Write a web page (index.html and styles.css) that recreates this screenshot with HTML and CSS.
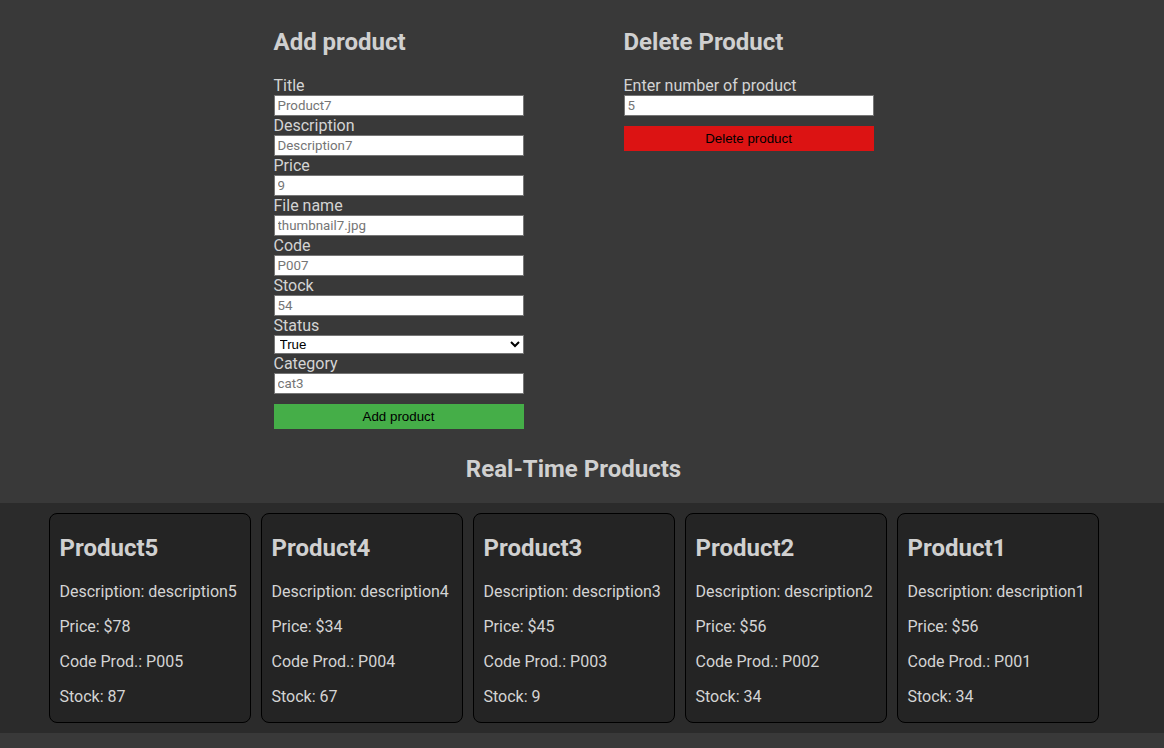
FILE: index.html
```html
<!DOCTYPE html>
<html lang="en">
<head>
<meta charset="utf-8">
<title>Products</title>
<link rel="stylesheet" href="styles.css">
</head>
<body>
  <div class="forms">
    <form class="panel">
      <h2 class="panel-title">Add product</h2>
      <label class="field-label" for="title">Title</label>
      <input class="field" id="title" type="text" placeholder="Product7">
      <label class="field-label" for="desc">Description</label>
      <input class="field" id="desc" type="text" placeholder="Description7">
      <label class="field-label" for="price">Price</label>
      <input class="field" id="price" type="text" placeholder="9">
      <label class="field-label" for="file">File name</label>
      <input class="field" id="file" type="text" placeholder="thumbnail7.jpg">
      <label class="field-label" for="code">Code</label>
      <input class="field" id="code" type="text" placeholder="P007">
      <label class="field-label" for="stock">Stock</label>
      <input class="field" id="stock" type="text" placeholder="54">
      <label class="field-label" for="status">Status</label>
      <select class="select" id="status">
        <option>True</option>
        <option>False</option>
      </select>
      <label class="field-label" for="cat">Category</label>
      <input class="field" id="cat" type="text" placeholder="cat3">
      <button type="button" class="btn btn-add">Add product</button>
    </form>
    <form class="panel">
      <h2 class="panel-title">Delete Product</h2>
      <label class="field-label" for="num">Enter number of product</label>
      <input class="field" id="num" type="text" placeholder="5">
      <button type="button" class="btn btn-delete">Delete product</button>
    </form>
  </div>
  <h2 class="section-title">Real-Time Products</h2>
  <div class="strip">
    <div class="card">
      <h2 class="card-title">Product5</h2>
      <p class="card-line">Description: description5</p>
      <p class="card-line">Price: $78</p>
      <p class="card-line">Code Prod.: P005</p>
      <p class="card-line">Stock: 87</p>
    </div>
    <div class="card">
      <h2 class="card-title">Product4</h2>
      <p class="card-line">Description: description4</p>
      <p class="card-line">Price: $34</p>
      <p class="card-line">Code Prod.: P004</p>
      <p class="card-line">Stock: 67</p>
    </div>
    <div class="card">
      <h2 class="card-title">Product3</h2>
      <p class="card-line">Description: description3</p>
      <p class="card-line">Price: $45</p>
      <p class="card-line">Code Prod.: P003</p>
      <p class="card-line">Stock: 9</p>
    </div>
    <div class="card">
      <h2 class="card-title">Product2</h2>
      <p class="card-line">Description: description2</p>
      <p class="card-line">Price: $56</p>
      <p class="card-line">Code Prod.: P002</p>
      <p class="card-line">Stock: 34</p>
    </div>
    <div class="card">
      <h2 class="card-title">Product1</h2>
      <p class="card-line">Description: description1</p>
      <p class="card-line">Price: $56</p>
      <p class="card-line">Code Prod.: P001</p>
      <p class="card-line">Stock: 34</p>
    </div>
  </div>
</body>
</html>
```
FILE: styles.css
```css
html {
  background: #393939;
}
body {
  margin: 0;
  padding: 8px 0 20px;
  background: #393939;
  color: #d2d2d2;
  font-family: Roboto, "Liberation Sans", sans-serif;
  font-size: 16px;
}
.forms {
  display: flex;
  justify-content: center;
  gap: 100px;
  padding-right: 17px;
  padding-bottom: 6px;
}
.panel {
  width: 250px;
  display: flex;
  flex-direction: column;
  margin: 0;
}
.panel-title {
  font-size: 24px;
  font-weight: 700;
  margin: 20px 0;
  color: #d0d0d0;
}
.field-label {
  display: block;
  font-size: 16px;
  line-height: 19px;
  color: #d4d4d4;
}
.field {
  box-sizing: border-box;
  width: 250px;
  height: 21px;
  margin: 0;
  padding: 1px 3px;
  border: 1px solid #767676;
  background: #fff;
  font-family: Roboto, "Liberation Sans", sans-serif;
  font-size: 13.33px;
  color: #000;
}
.field::placeholder {
  color: #757575;
}
.select {
  box-sizing: border-box;
  width: 250px;
  height: 19px;
  margin: 0;
  padding: 0 1px;
  border: 1px solid #767676;
  border-radius: 0;
  background: #fff;
  font-family: "Liberation Sans", Arial, sans-serif;
  font-size: 13.33px;
  color: #000;
}
.btn {
  box-sizing: border-box;
  width: 250px;
  height: 25px;
  margin-top: 10px;
  border: none;
  font-family: "Liberation Sans", Arial, sans-serif;
  font-size: 13.33px;
  color: #000;
  cursor: pointer;
}
.btn-add {
  background: #45ae48;
}
.btn-delete {
  background: #dc1313;
}
.section-title {
  text-align: center;
  font-size: 24px;
  font-weight: 700;
  margin: 20px 0;
  padding-right: 17px;
  color: #d0d0d0;
}
.strip {
  display: flex;
  justify-content: center;
  gap: 10px;
  padding: 10px 17px 10px 0;
  background: #2b2b2b;
}
.card {
  box-sizing: border-box;
  width: 202px;
  padding: 0 10px;
  background: #242424;
  border: 1px solid #000;
  border-radius: 8px;
  display: flow-root;
}
.card-title {
  font-size: 24px;
  font-weight: 700;
  margin: 20px 0;
  color: #d0d0d0;
}
.card-line {
  margin: 16px 0;
  font-size: 16px;
  color: #d4d4d4;
}
```
